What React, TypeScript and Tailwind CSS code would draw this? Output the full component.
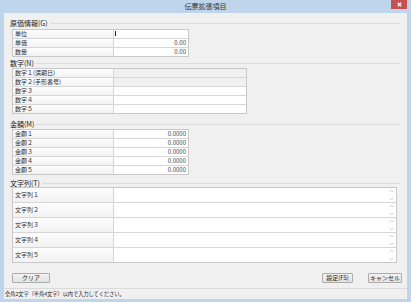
import React from 'react';

const font = { fontFamily: '"Noto Sans CJK JP", "Noto Sans", sans-serif' };

function SectionHeader({ title }: { title: string }) {
  return (
    <div className="flex items-center h-[8px] pl-[2px] mr-[7px]">
      <span className="text-[7px] leading-[8px] text-[#222] whitespace-nowrap">{title}</span>
      <div className="flex-1 h-px bg-[#dcdcdc] ml-[2px]" />
    </div>
  );
}

function Row({
  label,
  value,
  disabled,
  cursor,
  first,
  h = 'h-[9px]',
  arrows,
}: {
  label: string;
  value?: string;
  disabled?: boolean;
  cursor?: boolean;
  first?: boolean;
  h?: string;
  arrows?: boolean;
}) {
  return (
    <div className={`flex ${first ? '' : 'border-t border-[#d6d6d6]'} ${h}`}>
      <div className="w-[101px] shrink-0 border-r border-[#d6d6d6] bg-gradient-to-b from-[#fdfdfd] to-[#f2f2f2] pl-[2px] flex items-center">
        <span className="text-[6px] leading-[8px] text-[#333] whitespace-nowrap">{label}</span>
      </div>
      <div
        className={`flex-1 flex items-center justify-end pr-[2px] relative ${
          disabled ? 'bg-[#f0f0f0]' : 'bg-white'
        }`}
      >
        {cursor && <div className="absolute left-[1px] top-[1px] w-px h-[5px] bg-[#222]" />}
        {value && <span className="text-[6px] leading-[8px] text-[#444]">{value}</span>}
        {arrows && (
          <div className="flex flex-col justify-between h-full py-[1px]">
            <svg width="5" height="4" viewBox="0 0 5 4">
              <path d="M0.8 3 L2.5 1.2 L4.2 3" fill="none" stroke="#bdbdbd" strokeWidth="0.8" />
            </svg>
            <svg width="5" height="4" viewBox="0 0 5 4">
              <path d="M0.8 1 L2.5 2.8 L4.2 1" fill="none" stroke="#bdbdbd" strokeWidth="0.8" />
            </svg>
          </div>
        )}
      </div>
    </div>
  );
}

function Button({ label, w }: { label: string; w: string }) {
  return (
    <div
      className={`${w} h-[10px] rounded-[1px] border border-[#acacac] bg-gradient-to-b from-[#f2f2f2] to-[#e3e3e3] flex items-center justify-center`}
    >
      <span className="text-[6px] leading-[8px] text-[#222] whitespace-nowrap">{label}</span>
    </div>
  );
}

export default function App() {
  return (
    <div className="w-[411px] h-[302px] bg-[#bfd5ec] flex flex-col overflow-hidden" style={font}>
      {/* Title bar */}
      <div className="h-[13px] flex items-center relative shrink-0">
        <span className="flex-1 text-center text-[7px] leading-[9px] text-[#333]">伝票拡張項目</span>
        <div className="absolute right-[4px] top-0 w-[16px] h-[9px] bg-[#c75050] flex items-center justify-center">
          <svg width="5" height="5" viewBox="0 0 5 5">
            <path d="M0.8 0.8 L4.2 4.2 M4.2 0.8 L0.8 4.2" stroke="#fff" strokeWidth="1.3" />
          </svg>
        </div>
      </div>

      {/* Body */}
      <div className="mx-[4px] flex-1 bg-[#f0f0f0] flex flex-col">
        <div className="pt-[6px] pl-[4px]">
          <SectionHeader title="原価情報(G)" />
          <div className="ml-[4px] mt-[2px] w-[177px] border border-[#c8c8c8]">
            <Row label="単位" cursor first h="h-[8px]" />
            <Row label="単価" value="0.00" />
            <Row label="数量" value="0.00" />
          </div>

          <div className="mt-[2px]">
            <SectionHeader title="数字(N)" />
          </div>
          <div className="ml-[4px] mt-[1px] w-[235px] border border-[#c8c8c8]">
            <Row label="数字１(満期日)" disabled first h="h-[8px]" />
            <Row label="数字２(手形番号)" disabled />
            <Row label="数字３" />
            <Row label="数字４" />
            <Row label="数字５" />
          </div>

          <div className="mt-[6px]">
            <SectionHeader title="金額(M)" />
          </div>
          <div className="ml-[4px] mt-[1px] w-[177px] border border-[#c8c8c8]">
            <Row label="金額１" value="0.0000" first h="h-[8px]" />
            <Row label="金額２" value="0.0000" />
            <Row label="金額３" value="0.0000" />
            <Row label="金額４" value="0.0000" />
            <Row label="金額５" value="0.0000" />
          </div>

          <div className="mt-[4px]">
            <SectionHeader title="文字列(T)" />
          </div>
          <div className="ml-[4px] w-[385px] border border-[#c8c8c8]">
            <Row label="文字列１" h="h-[14px]" first arrows />
            <Row label="文字列２" h="h-[15px]" arrows />
            <Row label="文字列３" h="h-[15px]" arrows />
            <Row label="文字列４" h="h-[15px]" arrows />
            <Row label="文字列５" h="h-[15px]" arrows />
          </div>
        </div>

        {/* Buttons */}
        <div className="flex items-center mt-[10px] pl-[8px] pr-[5px]">
          <Button label="クリア" w="w-[38px]" />
          <div className="flex-1" />
          <Button label="設定(F5)" w="w-[31px]" />
          <div className="w-[15px]" />
          <Button label="キャンセル" w="w-[34px]" />
        </div>

        {/* Status bar */}
        <div className="mt-auto border-t border-[#dadada] h-[11px] flex items-center pl-[1px]">
          <span className="text-[5.2px] leading-[8px] text-[#222] whitespace-nowrap">
            全角2文字（半角4文字）以内で入力してください。
          </span>
        </div>
      </div>
      <div className="h-[3px] shrink-0" />
    </div>
  );
}
